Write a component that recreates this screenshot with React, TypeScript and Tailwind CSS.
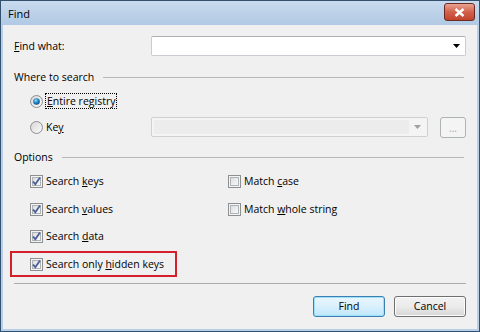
import React from 'react';

const font = 'font-["Segoe_UI","Open_Sans",sans-serif]';

const CheckBox = ({ checked }: { checked: boolean }) => (
  <svg width="13" height="13" viewBox="0 0 13 13" className="shrink-0">
    <defs>
      <linearGradient id="cbg" x1="0" y1="0" x2="1" y2="1">
        <stop offset="0" stopColor="#dcdcdc" />
        <stop offset="1" stopColor="#fbfbfb" />
      </linearGradient>
    </defs>
    <rect x="0.5" y="0.5" width="12" height="12" fill="#f4f4f4" stroke="#8e8f8f" />
    <rect x="2.5" y="2.5" width="8" height="8" fill="url(#cbg)" stroke="#aeb3b9" />
    {checked && (
      <path d="M3 6.5 L5.3 9.2 L10 2.6" fill="none" stroke="#4a5f97" strokeWidth="1.8" />
    )}
  </svg>
);

const Radio = ({ checked }: { checked: boolean }) => (
  <svg width="13" height="13" viewBox="0 0 13 13" className="shrink-0">
    <defs>
      <linearGradient id="rbg" x1="0" y1="0" x2="1" y2="1">
        <stop offset="0" stopColor="#d6d6d6" />
        <stop offset="1" stopColor="#fbfbfb" />
      </linearGradient>
      <radialGradient id="rdot" cx="0.4" cy="0.35" r="0.7">
        <stop offset="0" stopColor="#a8e1f8" />
        <stop offset="0.45" stopColor="#2a8ccb" />
        <stop offset="1" stopColor="#0d4b7c" />
      </radialGradient>
    </defs>
    <circle cx="6.5" cy="6.5" r="6" fill="url(#rbg)" stroke="#8e8f8f" />
    {checked && <circle cx="6.5" cy="6.5" r="3.3" fill="url(#rdot)" />}
  </svg>
);

const GroupHeader = ({ label }: { label: string }) => (
  <div className="flex items-center h-[14px] pr-[2px]">
    <span className="leading-none">{label}</span>
    <div className="flex-1 h-px bg-[#b8b8b8] ml-[9px]" />
  </div>
);

const CheckRow = ({ checked = true, children }: { checked?: boolean; children: React.ReactNode }) => (
  <div className="flex items-center gap-[3px] h-[14px] leading-none">
    <CheckBox checked={checked} />
    <span>{children}</span>
  </div>
);

export default function App() {
  return (
    <div className={`w-[480px] h-[332px] flex flex-col border border-[#34506f] bg-[#b7cfe8] text-[10.5px] text-black whitespace-nowrap ${font}`}>
      <div className="h-[24px] flex items-center justify-between pl-[7px] pr-[4px] bg-gradient-to-b from-[#c8daee] to-[#b1c9e4]">
        <span className="leading-none text-[11px]">Find</span>
        <div className="w-[31px] h-[18px] rounded-[3px] border border-[#6a2a21] bg-gradient-to-b from-[#e8a493] via-[#d2614a] to-[#c2442d] flex items-center justify-center mt-[-2px]">
          <svg width="11" height="9" viewBox="0 0 11 9">
            <path d="M1.5 1 L9.5 8 M9.5 1 L1.5 8" stroke="#ffffff" strokeWidth="2.4" />
          </svg>
        </div>
      </div>

      <div className="flex-1 mx-[2px] mb-[2px] bg-[#f0f0f0] flex flex-col px-[11px] pt-[11px]">
        {/* find what */}
        <div className="flex items-center h-[20px]">
          <span className="w-[137px] leading-none">
            <u>F</u>ind what:
          </span>
          <div className="flex-1 h-[20px] bg-white border border-[#c9cdd3] border-t-[#abadb3] rounded-[2px] flex items-center justify-end pr-[5px]">
            <svg width="7" height="4" viewBox="0 0 7 4">
              <path d="M0 0 H7 L3.5 4 Z" fill="#000" />
            </svg>
          </div>
        </div>

        <div className="mt-[14px]">
          <GroupHeader label="Where to search" />
        </div>

        <div className="mt-[9px] flex items-center h-[16px] pl-[16px] gap-[2px]">
          <Radio checked />
          <span className="border border-dotted border-black px-px leading-[14px] h-[16px]">
            <u>E</u>ntire registry
          </span>
        </div>

        <div className="mt-[8px] flex items-center h-[20px] pl-[16px]">
          <div className="w-[121px] flex items-center gap-[3px]">
            <Radio checked={false} />
            <span className="leading-none">
              Ke<u>y</u>
            </span>
          </div>
          <div className="w-[277px] h-[20px] border border-[#d0d0d0] rounded-[2px] bg-[#f4f4f4] flex items-center p-[2px]">
            <div className="flex-1 h-full bg-[#ececec]" />
            <div className="w-[16px] flex justify-center">
              <svg width="7" height="4" viewBox="0 0 7 4">
                <path d="M0 0 H7 L3.5 4 Z" fill="#a0a0a0" />
              </svg>
            </div>
          </div>
          <div className="ml-[12px] w-[26px] h-[21px] border border-[#adb2b5] rounded-[3px] bg-[#f4f4f4] flex items-end justify-center pb-[4px] text-[#a0a0a0] text-[10px] leading-none">
            ...
          </div>
        </div>

        <div className="mt-[13px]">
          <GroupHeader label="Options" />
        </div>

        <div className="mt-[10px] flex pl-[16px]">
          <div className="w-[198px] flex flex-col gap-[14px]">
            <CheckRow>
              Search <u>k</u>eys
            </CheckRow>
            <CheckRow>
              Search <u>v</u>alues
            </CheckRow>
          </div>
          <div className="flex flex-col gap-[14px]">
            <CheckRow checked={false}>
              Match <u>c</u>ase
            </CheckRow>
            <CheckRow checked={false}>
              Match <u>w</u>hole string
            </CheckRow>
          </div>
        </div>

        <div className="mt-[13px] pl-[16px]">
          <CheckRow>
            Search <u>d</u>ata
          </CheckRow>
        </div>

        <div className="mt-[8px] ml-[-4px] w-[167px] h-[26px] border-2 border-[#d3202b] flex items-center pl-[18px]">
          <CheckRow>
            Search only <u>h</u>idden keys
          </CheckRow>
        </div>

        <div className="mt-[6px] h-px bg-[#acacac]" />

        <div className="mt-[12px] flex justify-end gap-[9px]">
          <button className="w-[72px] h-[21px] rounded-[3px] border border-[#3c7fb1] bg-gradient-to-b from-[#eaf6fd] via-[#d9f0fc] to-[#bee6fd] shadow-[inset_0_0_0_1px_#9ee0fb] leading-none">
            Find
          </button>
          <button className="w-[72px] h-[21px] rounded-[3px] border border-[#707070] bg-gradient-to-b from-[#f2f2f2] via-[#ebebeb] to-[#d6d6d6] shadow-[inset_0_0_0_1px_#fcfcfc] leading-none">
            Cancel
          </button>
        </div>
      </div>
    </div>
  );
}
